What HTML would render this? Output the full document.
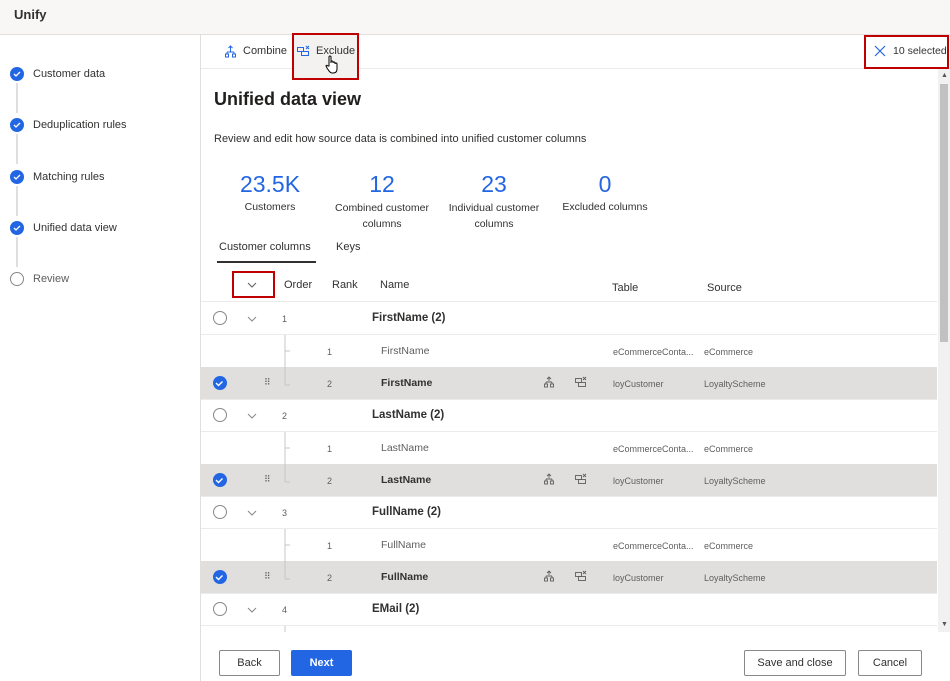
<!DOCTYPE html>
<html><head><meta charset="utf-8"><style>
*{box-sizing:border-box;margin:0;padding:0}
body{width:950px;height:681px;overflow:hidden;font-family:"Liberation Sans",sans-serif;color:#323130;background:#fff;position:relative;font-size:11px}
.a{position:absolute;white-space:nowrap}
.top{left:0;top:0;width:950px;height:35px;background:#f8f7f6;border-bottom:1px solid #e1dfdd}
.nav{left:0;top:35px;width:201px;height:646px;border-right:1px solid #e1dfdd}
.step{left:10px;width:14px;height:14px;border-radius:50%;background:#2266e3}
.step svg{position:absolute;left:3px;top:3px}
.line{left:16px;width:2px;height:30px;background:#e1dfdd}
.sl{left:33px;font-size:11px}
.row{left:201px;width:736px;height:33px;border-bottom:1px solid #edebe9}
.sel{background:#e1dfdd}
.rad{width:14px;height:14px;border-radius:50%;border:1px solid #8a8886;left:12px;top:9px}
.chk{width:14px;height:14px;border-radius:50%;background:#2266e3;left:12px;top:9px}
.t{font-size:11.5px;top:10px}
.s{font-size:9px;top:12px;color:#605e5c}
.btn{height:26px;border:1px solid #8a8886;border-radius:2px;font-size:11px;text-align:center;line-height:24px;background:#fff}
.red{border:2px solid #c00000}
</style></head><body>
<div class="a top"></div>
<div class="a" style="left:14px;top:7px;font-size:13px;font-weight:bold">Unify</div>
<div class="a nav"></div>
<div class="a step" style="top:67px"><svg width="8" height="8" viewBox="0 0 8 8"><path d="M1 4l2 2 4-4" stroke="#fff" stroke-width="1.3" fill="none"/></svg></div>
<div class="a line" style="top:83px"></div>
<div class="a sl" style="top:68px">Customer data</div>
<div class="a step" style="top:118px"><svg width="8" height="8" viewBox="0 0 8 8"><path d="M1 4l2 2 4-4" stroke="#fff" stroke-width="1.3" fill="none"/></svg></div>
<div class="a line" style="top:134px"></div>
<div class="a sl" style="top:119px">Deduplication rules</div>
<div class="a step" style="top:170px"><svg width="8" height="8" viewBox="0 0 8 8"><path d="M1 4l2 2 4-4" stroke="#fff" stroke-width="1.3" fill="none"/></svg></div>
<div class="a line" style="top:186px"></div>
<div class="a sl" style="top:171px">Matching rules</div>
<div class="a step" style="top:221px"><svg width="8" height="8" viewBox="0 0 8 8"><path d="M1 4l2 2 4-4" stroke="#fff" stroke-width="1.3" fill="none"/></svg></div>
<div class="a line" style="top:237px"></div>
<div class="a sl" style="top:222px">Unified data view</div>
<div class="a" style="left:10px;top:272px;width:14px;height:14px;border-radius:50%;border:1px solid #8a8886"></div>
<div class="a sl" style="top:273px;color:#605e5c">Review</div>

<div class="a" style="left:201px;top:68px;width:749px;height:1px;background:#edebe9"></div>
<svg class="a" style="left:224px;top:45px" width="13" height="13" viewBox="0 0 13 13" fill="none" stroke="#2266e3" stroke-width="1"><path d="M6.5 1v4M4.5 3l2-2 2 2M6.5 5v2M3 7h7M3 7v2M10 7v2"/><rect x="1.5" y="9" width="3" height="3"/><rect x="8.5" y="9" width="3" height="3"/></svg>
<div class="a" style="left:243px;top:45px;font-size:11px">Combine</div>
<div class="a" style="left:293px;top:35px;width:64px;height:44px;background:#f3f2f1"></div>
<svg class="a" style="left:297px;top:45px" width="14" height="12" viewBox="0 0 14 12" fill="none" stroke="#2266e3" stroke-width="1"><rect x="0.5" y="2.5" width="6" height="4"/><rect x="4.5" y="6.5" width="7" height="4"/><path d="M9 1l3 3M12 1l-3 3"/></svg>
<div class="a" style="left:316px;top:45px;font-size:11px">Exclude</div>
<svg class="a" style="left:325px;top:55px" width="14" height="20" viewBox="0 0 14 20" fill="#fff" stroke="#000" stroke-width="1"><path d="M4 11V2a1 1 0 0 1 2 0v6 -1a1 1 0 0 1 2 0v1a1 1 0 0 1 2 0v1a1 1 0 0 1 2 0v5c0 3-2 4-4 4H7c-2 0-3-2-5-5l-1-2c0-1 1-1 2 0z"/></svg>
<div class="a red" style="left:292px;top:33px;width:67px;height:47px"></div>
<svg class="a" style="left:874px;top:45px" width="12" height="12" viewBox="0 0 12 12" stroke="#2266e3" stroke-width="1.2"><path d="M1 1l10 10M11 1L1 11"/></svg>
<div class="a" style="left:893px;top:45px;font-size:10.5px">10 selected</div>
<div class="a red" style="left:864px;top:35px;width:85px;height:34px"></div>

<div class="a" style="left:938px;top:69px;width:12px;height:563px;background:#f1f1f1"></div>
<div class="a" style="left:940px;top:84px;width:8px;height:258px;background:#c1c1c1"></div>
<div class="a" style="left:941px;top:72px;font-size:7px;color:#555">▲</div>
<div class="a" style="left:941px;top:621px;font-size:7px;color:#555">▼</div>

<div class="a" style="left:214px;top:89px;font-size:18px;font-weight:bold;color:#201f1e">Unified data view</div>
<div class="a" style="left:214px;top:133px;font-size:11px">Review and edit how source data is combined into unified customer columns</div>
<div class="a" style="left:220px;top:171px;width:100px;text-align:center;font-size:23px;color:#2266e3">23.5K</div>
<div class="a" style="left:220px;top:201px;width:100px;text-align:center;font-size:10.5px">Customers</div>
<div class="a" style="left:330px;top:171px;width:104px;text-align:center;font-size:23px;color:#2266e3">12</div>
<div class="a" style="left:330px;top:200px;width:104px;text-align:center;font-size:10.5px;line-height:16px;white-space:normal">Combined customer columns</div>
<div class="a" style="left:442px;top:171px;width:104px;text-align:center;font-size:23px;color:#2266e3">23</div>
<div class="a" style="left:442px;top:200px;width:104px;text-align:center;font-size:10.5px;line-height:16px;white-space:normal">Individual customer columns</div>
<div class="a" style="left:555px;top:171px;width:100px;text-align:center;font-size:23px;color:#2266e3">0</div>
<div class="a" style="left:555px;top:201px;width:100px;text-align:center;font-size:10.5px">Excluded columns</div>
<div class="a" style="left:219px;top:241px;font-size:11px">Customer columns</div>
<div class="a" style="left:217px;top:261px;width:99px;height:2px;background:#323130"></div>
<div class="a" style="left:336px;top:241px;font-size:11px">Keys</div>

<svg class="a" style="left:247px;top:282px" width="10" height="6" viewBox="0 0 10 6" fill="none" stroke="#605e5c"><path d="M1 1l4 4 4-4"/></svg>
<div class="a red" style="left:232px;top:271px;width:43px;height:27px"></div>
<div class="a" style="left:284px;top:279px;font-size:11px">Order</div>
<div class="a" style="left:332px;top:279px;font-size:11px">Rank</div>
<div class="a" style="left:380px;top:279px;font-size:11px">Name</div>
<div class="a" style="left:612px;top:282px;font-size:11px">Table</div>
<div class="a" style="left:707px;top:282px;font-size:11px">Source</div>
<div class="a" style="left:201px;top:301px;width:736px;height:1px;background:#edebe9"></div>

<div class="a row" style="top:302px"><div class="a rad"></div><svg class="a" style="left:46px;top:14px" width="10" height="6" viewBox="0 0 10 6" fill="none" stroke="#8a8886"><path d="M1 1l4 4 4-4"/></svg><div class="a s" style="left:81px">1</div><div class="a t" style="left:171px;font-weight:bold">FirstName (2)</div></div>
<div class="a row" style="top:335px"><div class="a s" style="left:126px">1</div><div class="a s" style="left:180px;font-size:10.5px;top:10px">FirstName</div><div class="a s" style="left:412px">eCommerceConta...</div><div class="a s" style="left:503px">eCommerce</div></div>
<div class="a row sel" style="top:367px"><div class="a chk"></div><div class="a s" style="left:63px;top:10px">⠿</div><div class="a s" style="left:126px">2</div><div class="a t" style="left:180px;font-weight:bold;font-size:10.5px;top:10px">FirstName</div><div class="a s" style="left:412px">loyCustomer</div><div class="a s" style="left:503px">LoyaltyScheme</div></div>

<div class="a row" style="top:399px"><div class="a rad"></div><svg class="a" style="left:46px;top:14px" width="10" height="6" viewBox="0 0 10 6" fill="none" stroke="#8a8886"><path d="M1 1l4 4 4-4"/></svg><div class="a s" style="left:81px">2</div><div class="a t" style="left:171px;font-weight:bold">LastName (2)</div></div>
<div class="a row" style="top:432px"><div class="a s" style="left:126px">1</div><div class="a s" style="left:180px;font-size:10.5px;top:10px">LastName</div><div class="a s" style="left:412px">eCommerceConta...</div><div class="a s" style="left:503px">eCommerce</div></div>
<div class="a row sel" style="top:464px"><div class="a chk"></div><div class="a s" style="left:63px;top:10px">⠿</div><div class="a s" style="left:126px">2</div><div class="a t" style="left:180px;font-weight:bold;font-size:10.5px;top:10px">LastName</div><div class="a s" style="left:412px">loyCustomer</div><div class="a s" style="left:503px">LoyaltyScheme</div></div>

<div class="a row" style="top:496px"><div class="a rad"></div><svg class="a" style="left:46px;top:14px" width="10" height="6" viewBox="0 0 10 6" fill="none" stroke="#8a8886"><path d="M1 1l4 4 4-4"/></svg><div class="a s" style="left:81px">3</div><div class="a t" style="left:171px;font-weight:bold">FullName (2)</div></div>
<div class="a row" style="top:529px"><div class="a s" style="left:126px">1</div><div class="a s" style="left:180px;font-size:10.5px;top:10px">FullName</div><div class="a s" style="left:412px">eCommerceConta...</div><div class="a s" style="left:503px">eCommerce</div></div>
<div class="a row sel" style="top:561px"><div class="a chk"></div><div class="a s" style="left:63px;top:10px">⠿</div><div class="a s" style="left:126px">2</div><div class="a t" style="left:180px;font-weight:bold;font-size:10.5px;top:10px">FullName</div><div class="a s" style="left:412px">loyCustomer</div><div class="a s" style="left:503px">LoyaltyScheme</div></div>

<div class="a row" style="top:593px"><div class="a rad"></div><svg class="a" style="left:46px;top:14px" width="10" height="6" viewBox="0 0 10 6" fill="none" stroke="#8a8886"><path d="M1 1l4 4 4-4"/></svg><div class="a s" style="left:81px">4</div><div class="a t" style="left:171px;font-weight:bold">EMail (2)</div></div>

<svg class="a" style="left:201px;top:302px" width="400" height="330" fill="none">
<g stroke="#fff" stroke-width="1.4"><path d="M15 81l2.5 2.5 4-4"/><path d="M15 178l2.5 2.5 4-4"/><path d="M15 275l2.5 2.5 4-4"/></g>
<g stroke="#c8c6c4"><path d="M84 33v50M84 49h5M84 83h5M84 130v50M84 146h5M84 180h5M84 227v50M84 243h5M84 277h5M84 324v6"/></g>
<g stroke="#605e5c" stroke-width="0.9">
<g transform="translate(343,75)"><path d="M5 0v4M3 2l2-2 2 2M2 5h6M2 5v2M8 5v2"/><rect x="0.5" y="7" width="3" height="3"/><rect x="6.5" y="7" width="3" height="3"/></g>
<g transform="translate(374,75)"><rect x="0.5" y="1.5" width="6" height="4"/><rect x="3.5" y="5.5" width="7" height="4"/><path d="M8 0l3 3M11 0l-3 3"/></g>
<g transform="translate(343,172)"><path d="M5 0v4M3 2l2-2 2 2M2 5h6M2 5v2M8 5v2"/><rect x="0.5" y="7" width="3" height="3"/><rect x="6.5" y="7" width="3" height="3"/></g>
<g transform="translate(374,172)"><rect x="0.5" y="1.5" width="6" height="4"/><rect x="3.5" y="5.5" width="7" height="4"/><path d="M8 0l3 3M11 0l-3 3"/></g>
<g transform="translate(343,269)"><path d="M5 0v4M3 2l2-2 2 2M2 5h6M2 5v2M8 5v2"/><rect x="0.5" y="7" width="3" height="3"/><rect x="6.5" y="7" width="3" height="3"/></g>
<g transform="translate(374,269)"><rect x="0.5" y="1.5" width="6" height="4"/><rect x="3.5" y="5.5" width="7" height="4"/><path d="M8 0l3 3M11 0l-3 3"/></g>
</g>
</svg>
<div class="a" style="left:201px;top:632px;width:749px;height:49px;background:#fff"></div>
<div class="a btn" style="left:219px;top:650px;width:61px">Back</div>
<div class="a btn" style="left:291px;top:650px;width:61px;background:#2266e3;border-color:#2266e3;color:#fff;font-weight:bold">Next</div>
<div class="a btn" style="left:744px;top:650px;width:102px">Save and close</div>
<div class="a btn" style="left:858px;top:650px;width:64px">Cancel</div>
</body></html>
